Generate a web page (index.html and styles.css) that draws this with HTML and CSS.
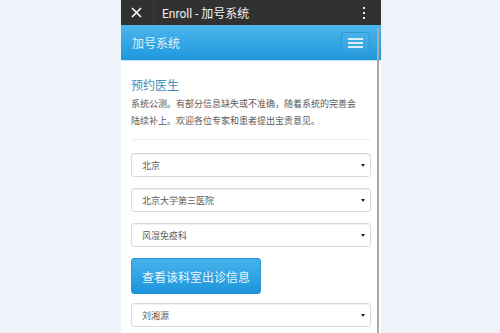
FILE: index.html
```html
<!DOCTYPE html>
<html>
<head>
  <meta charset="utf-8">
  <link rel="stylesheet" href="styles.css">
</head>
<body>
  <div class="phone">
    <div class="topbar">
      <span class="close">
        <svg width="11" height="11" viewBox="0 0 11 11"><path d="M1 1L10 10M10 1L1 10" stroke="#fff" stroke-width="1.6" fill="none"/></svg>
      </span>
      <span class="title">Enroll - 加号系统</span>
      <span class="dots"><i></i><i></i><i></i></span>
    </div>

    <div class="navbar">
      <span class="brand">加号系统</span>
      <button class="toggle"><span></span><span></span><span></span></button>
    </div>

    <div class="content">
      <h3>预约医生</h3>
      <p>系统公测。有部分信息缺失或不准确，随着系统的完善会陆续补上。欢迎各位专家和患者提出宝贵意见。</p>
      <hr>
      <div class="select">北京</div>
      <div class="select">北京大学第三医院</div>
      <div class="select">风湿免疫科</div>
      <button class="btn">查看该科室出诊信息</button>
      <div class="select">刘湘源</div>
    </div>

    <div class="scrollbar"></div>
  </div>
</body>
</html>
```

FILE: styles.css
```css
* {
  box-sizing: border-box;
}

body {
  margin: 0;
  padding-left: 2px;
  display: flex;
  justify-content: center;
  background: #eef2f9;
  font-family: Roboto, "Noto Sans CJK SC", sans-serif;
}

.phone {
  width: 260px;
  height: 333px;
  background: #fff;
  position: relative;
  overflow: hidden;
}

/* app title bar */
.topbar {
  height: 25px;
  background: #313131;
  color: #fff;
  display: flex;
  align-items: center;
  padding: 0 16px 0 10px;
}

.close {
  display: flex;
  align-items: center;
  height: 25px;
  padding-right: 11px;
  border-right: 1px solid #3a3a3a;
}

.title {
  flex: 1;
  margin-left: 8px;
  font-size: 12px;
  color: #f2f2f2;
}

.dots {
  display: flex;
  flex-direction: column;
  gap: 3px;
}

.dots i {
  width: 2px;
  height: 2px;
  background: #eee;
}

/* blue navbar */
.navbar {
  height: 36px;
  background: linear-gradient(#4db5ec, #1f98dd);
  border-bottom: 1px solid #c4e3f5;
  display: flex;
  align-items: center;
  justify-content: space-between;
  padding: 0 11px;
}

.brand {
  font-size: 12px;
  color: #e0f1fb;
}

.toggle {
  width: 29px;
  height: 22px;
  padding: 0;
  border: 1px solid #3197d6;
  border-radius: 3px;
  background: rgba(255, 255, 255, 0.04);
  display: flex;
  flex-direction: column;
  align-items: center;
  justify-content: center;
  gap: 2px;
}

.toggle span {
  width: 15px;
  height: 2px;
  background: #d8eefa;
}

/* page body */
.content {
  padding: 0 10px;
}

.content h3 {
  margin: 18px 0 0;
  font-size: 12px;
  line-height: 14px;
  font-weight: normal;
  color: #3f8fc0;
}

.content p {
  max-width: 231px;
  margin: 3px 0 10px;
  font-size: 9px;
  line-height: 16.7px;
  color: #5a5a5a;
}

.content hr {
  margin: 0 0 13px;
  border: 0;
  border-top: 1px solid #eee;
}

.select {
  position: relative;
  height: 24px;
  margin-bottom: 11px;
  padding-left: 10px;
  display: flex;
  align-items: center;
  border: 1px solid #d9d9d9;
  border-radius: 3px;
  box-shadow: inset 0 1px 1px rgba(0, 0, 0, 0.06);
  font-size: 9px;
  color: #5a5a5a;
}

.select::after {
  content: '';
  position: absolute;
  right: 5px;
  top: 10px;
  border-left: 2.5px solid transparent;
  border-right: 2.5px solid transparent;
  border-top: 3.5px solid #222;
}

.btn {
  display: block;
  width: 130px;
  height: 36px;
  margin-bottom: 9px;
  border: 1px solid #2593d6;
  border-radius: 3px;
  background: linear-gradient(#47b3ed, #1d95dc);
  color: #eaf5fc;
  font-family: inherit;
  font-size: 12px;
}

.scrollbar {
  position: absolute;
  left: 256px;
  top: 28px;
  bottom: 0;
  width: 2px;
  background: #ababab;
}
```
